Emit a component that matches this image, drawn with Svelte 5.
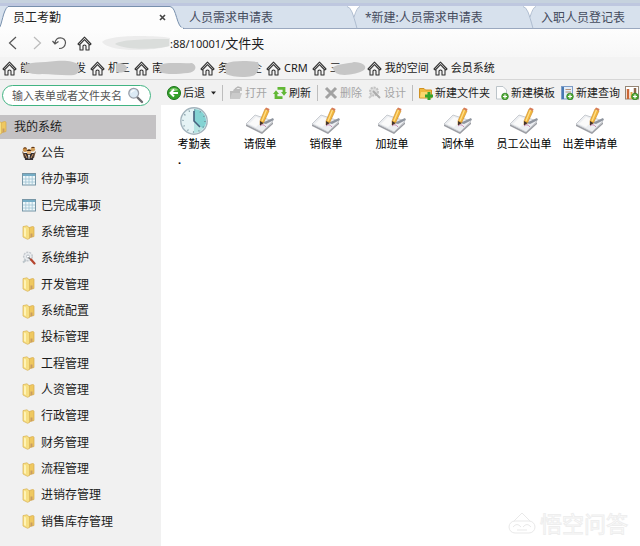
<script>
  const tabs = ['人员需求申请表', '*新建:人员需求申请表', '入职人员登记表'];

  const bookmarks = [
    { head: '能', tail: '发', chars: 6, blob: 'M3 7C8 1 22 3 36 1C48 0 54 2 58 4C62 10 58 14 54 15C44 16 34 14 22 14C12 15 3 12 3 7Z' },
    { head: '机', tail: '三', chars: 2, blob: 'M8 4C12 2 18 4 19 8C18 13 12 13 8 12Z' },
    { head: '南', tail: '', chars: 4, blob: 'M7 6C12 1 30 4 40 3C46 6 44 12 36 13C26 14 14 15 8 12Z' },
    { head: '务', tail: '企', chars: 4, blob: 'M7 4C16 0 30 1 40 2C42 8 40 15 34 16C26 18 14 17 8 14Z' },
    { head: 'CRM' },
    { head: '三', tail: '', chars: 3, blob: 'M2 8C8 3 18 4 24 2C32 2 38 6 34 10C28 14 12 17 6 13Z' },
    { head: '我的空间' },
    { head: '会员系统' }
  ];

  const tree = [
    ['公告', 'people'],
    ['待办事项', 'table'],
    ['已完成事项', 'table'],
    ['系统管理', 'folder'],
    ['系统维护', 'tool'],
    ['开发管理', 'folder'],
    ['系统配置', 'folder'],
    ['投标管理', 'folder'],
    ['工程管理', 'folder'],
    ['人资管理', 'folder'],
    ['行政管理', 'folder'],
    ['财务管理', 'folder'],
    ['流程管理', 'folder'],
    ['进销存管理', 'folder'],
    ['销售库存管理', 'folder']
  ];

  const forms = ['请假单', '销假单', '加班单', '调休单', '员工公出单', '出差申请单'];
</script>

{#snippet home()}
  <svg width="15" height="15" viewBox="0 0 15 15" fill="none" stroke="#333" stroke-width="1.1" stroke-linejoin="round">
    <path d="M1 8L7.5 1.2L14 8L12.7 9L7.5 3.7L2.3 9Z" />
    <path d="M3 9V14H6V10Q6 9 7.5 9T9 10V14H12V9" />
  </svg>
{/snippet}

{#snippet folder()}
  <svg width="14" height="15" viewBox="0 0 14 15">
    <path d="M6 3L10.500 1.500Q12 1.500 12 2.500V11.500L6 13Z" fill="#efc860" stroke="#d5a94b" stroke-width=".7" />
    <path d="M1 1.6L5 .8L7.500 3V13.500L5.500 14.300L1 12Z" fill="#f7df82" stroke="#d7b054" stroke-width=".7" />
    <path d="M2 2.500L4 3.500V12L2 11Z" fill="#fff3b5" />
    <path d="M8.500 8.500H10.500V12L8.500 12.500Z" fill="#c99d62" />
  </svg>
{/snippet}

{#snippet treeIcon(kind)}
  {#if kind === 'folder'}
    {@render folder()}
  {:else if kind === 'table'}
    <svg width="14" height="13" viewBox="0 0 14 13">
      <rect x=".5" y=".5" width="13" height="11.5" fill="#eff8fb" stroke="#7796a6" />
      <rect x="1" y="1" width="12" height="2" fill="#75adc6" />
      <path d="M3.8 3V12M7 3V12M10.2 3V12M1 6H13M1 9H13" stroke="#9fc3d3" stroke-width=".8" />
    </svg>
  {:else if kind === 'people'}
    <svg width="14" height="14" viewBox="0 0 14 14">
      <path d="M0 5L3 8L4 12H2ZM14 5L11 8L10 12H12Z" fill="#705037" />
      <circle cx="3" cy="3.7" r="2.3" fill="#c98d45" />
      <circle cx="10.8" cy="3.2" r="2.3" fill="#d3a05a" />
      <path d="M1 2.5Q3 0 5 2.5ZM9 2Q11 -.5 13 2Z" fill="#5c3519" />
      <path d="M2 7H12L11 14H3Z" fill="#363033" />
      <circle cx="7" cy="6" r="2.4" fill="#e3b278" />
      <path d="M4.5 5Q7 1.5 9.5 5Z" fill="#382315" />
      <path d="M6 9H8L7.3 13H6.7Z" fill="#eee" />
      <path d="M3 8L5 12M11 8L9 12" stroke="#d39b64" />
    </svg>
  {:else}
    <svg width="14" height="14" viewBox="0 0 14 14">
      <circle cx="6" cy="5.5" r="4.3" fill="#e8ebee" stroke="#c3c8cd" stroke-width="1.5" stroke-dasharray="2 1" />
      <circle cx="6" cy="5.5" r="1.5" fill="#fff" stroke="#b9bfc5" />
      <path d="M1 11.5L4 9" stroke="#bcc5ca" stroke-width="2" />
      <path d="M6.5 6.5L10 9.5" stroke="#777" stroke-width="1.3" />
      <path d="M9 8.5L12.5 12.5" stroke="#b5452e" stroke-width="2.2" stroke-linecap="round" />
    </svg>
  {/if}
{/snippet}

{#snippet plus()}
  <circle cx="10" cy="10.5" r="3.3" fill="#56ad3a" stroke="#2c8221" stroke-width=".8" />
  <path d="M8 10.5H12M10 8.5V12.5" stroke="#fff" stroke-width="1.2" />
{/snippet}

<div class="window">
  <header>
    <nav class="tabs" aria-label="标签页">
      <div class="tab active">
        <svg class="shape" width="184" height="23" viewBox="0 0 184 23">
          <path d="M-1 22.5C2 19 3 4 8 .5H170C177 1 176 22 184 22.5V23H-1Z" fill="#fdfdfd" stroke="#7890ad" />
          <path d="M0 22.5H183" stroke="#fdfdfd" stroke-width="2" />
        </svg>
        <button class="title">员工考勤</button>
        <button class="close" aria-label="关闭">
          <svg width="7" height="7" viewBox="0 0 7 7"><path d="M1 1L6 6M6 1L1 6" stroke="#444" stroke-width="1.6" /></svg>
        </button>
      </div>
      {#each tabs as name, i}
        <div class="tab">
          {#if i > 0}
            <svg class="notch" width="16" height="23" viewBox="0 0 16 23">
              <path d="M1 0H14Q11 2 8 11Q5 2 1 0Z" fill="#fff" />
              <path d="M1 .5Q4 1 6 6T11 22.5M14 .5Q11 1 8 11" fill="none" stroke="#a3b2c8" stroke-width=".8" />
            </svg>
          {/if}
          <button class="title">{name}</button>
        </div>
      {/each}
    </nav>

    <div class="address">
      <div class="history">
        <button aria-label="后退">
          <svg width="9" height="14" viewBox="0 0 9 14" fill="none" stroke="#555" stroke-width="1.2"><path d="M8 1L1.5 7L8 13" /></svg>
        </button>
        <button aria-label="前进">
          <svg width="9" height="14" viewBox="0 0 9 14" fill="none" stroke="#bbb" stroke-width="1.2"><path d="M1 1L7.5 7L1 13" /></svg>
        </button>
      </div>
      <button aria-label="刷新">
        <svg width="15" height="14" viewBox="0 0 15 14" fill="none" stroke="#555" stroke-width="1.2"><path d="M3 7.5C3 -.5 14 .5 13.5 7C13 11 10 12.5 7 12.5M.5 5L3 8L6.5 5.5" /></svg>
      </button>
      <button aria-label="主页">{@render home()}</button>
      <svg class="veil" width="68" height="16" viewBox="0 0 68 16">
        <path d="M0 7C6 0 50 0 68 3V11C52 16 8 18 0 7Z" fill="#ececec" />
        <path d="M13 9C20 4 50 4 67 4V11C52 15 24 15 13 9Z" fill="#dadddb" />
      </svg>
      <span class="url">:88/10001/<span class="path">文件夹</span></span>
    </div>

    <nav class="bookmarks" aria-label="书签">
      {#each bookmarks as b}
        <a href="#top">
          {@render home()}
          <span class="mark" style:width={b.chars ? `${b.chars}em` : null}>
            <span>{b.head}</span>
            {#if b.blob}
              <span>{b.tail}</span>
              <svg class="blob" width="68" height="18" viewBox="0 0 68 18"><path d={b.blob} fill="#c6c6c6" /></svg>
            {/if}
          </span>
        </a>
      {/each}
    </nav>
  </header>

  <div class="body">
    <aside>
      <label class="search">
        <input type="text" placeholder="输入表单或者文件夹名" aria-label="搜索" />
        <svg width="17" height="17" viewBox="0 0 17 17">
          <path d="M10 10L15 15" stroke="#6c6c70" stroke-width="2.4" stroke-linecap="round" />
          <circle cx="6.7" cy="6.2" r="4.9" fill="#dceaf5" stroke="#999ea8" stroke-width="1.3" />
          <path d="M4 5.5Q5 3.5 7.5 3.5" fill="none" stroke="#fff" stroke-width="1.2" />
        </svg>
      </label>
      <div class="root">{@render folder()}<span>我的系统</span></div>
      <ul>
        {#each tree as [name, kind]}
          <li><a href="#top"><span class="ico">{@render treeIcon(kind)}</span>{name}</a></li>
        {/each}
      </ul>
    </aside>

    <main>
      <div class="toolbar">
        <button>
          <svg width="14" height="14" viewBox="0 0 14 14">
            <circle cx="7" cy="7" r="6.5" fill="#35a12b" stroke="#1d741c" />
            <path d="M2.5 4Q7 0 11.5 4Q7 6 2.5 4Z" fill="#88cf74" />
            <path d="M11 7H4M7 3.5L3.5 7L7 10.5" fill="none" stroke="#fff" stroke-width="2" />
          </svg>后退
        </button>
        <svg width="5" height="4" viewBox="0 0 5 4"><path d="M0 .5H5L2.5 3.5Z" fill="#222" /></svg>
        <i></i>
        <button disabled>
          <svg width="14" height="14" viewBox="0 0 14 14">
            <path d="M1 5H4L5 3H11V12L9 13H1Z" fill="#bcbcbc" />
            <path d="M3 7H13L11 13H1Z" fill="#cacaca" /><path d="M6 3L9 1L12 2V5" fill="none" stroke="#b5b5b5" stroke-width="1.5" />
          </svg>打开
        </button>
        <button>
          <svg width="14" height="14" viewBox="0 0 14 14">
            <path d="M4.500 2.300H11V7M9.500 11.700H3V7" fill="none" stroke="#62b835" stroke-width="2.800" />
            <path d="M8 6H14L11 9.800ZM0 8H6L3 4.200Z" fill="#62b835" />
          </svg>刷新
        </button>
        <i></i>
        <button disabled>
          <svg width="14" height="14" viewBox="0 0 14 14"><path d="M2 2L12 12M12 2L2 12" stroke="#a2a2a2" stroke-width="3" /></svg>删除
        </button>
        <button disabled>
          <svg width="14" height="14" viewBox="0 0 14 14">
            <circle cx="6" cy="5.5" r="4" fill="#ddd" stroke="#c1c1c1" stroke-width="2" stroke-dasharray="2 1" />
            <path d="M5 5L12 12" stroke="#ababab" stroke-width="2" /><path d="M1 12L4 9" stroke="#ccc" stroke-width="2" />
          </svg>设计
        </button>
        <i></i>
        <div class="create">
          <button>
            <svg width="14" height="14" viewBox="0 0 14 14">
              <path d="M.5 2.5H5L6.5 4H12.5V12H.5Z" fill="#f1b83e" stroke="#d19223" />
              <path d="M2 6H12V11.5H1Z" fill="#fad76f" />
              <path d="M10 6V14M6 10H14" stroke="#35a32c" stroke-width="3" />
            </svg>新建文件夹
          </button>
          <button>
            <svg width="14" height="14" viewBox="0 0 14 14">
              <path d="M1.5 .5H8L11.5 4V13H1.5Z" fill="#fdfdfd" stroke="#bcc4c9" />{@render plus()}
            </svg>新建模板
          </button>
          <button>
            <svg width="14" height="14" viewBox="0 0 14 14">
              <rect x="1.5" y=".5" width="11" height="12.5" fill="#e2edf9" stroke="#7d9cc6" />
              <path d="M3 1V13" stroke="#4779b3" stroke-width="2" /><path d="M5.5 3.5H11M5.5 6H11" stroke="#b99377" />{@render plus()}
            </svg>新建查询
          </button>
          <button aria-label="新建报表">
            <svg width="14" height="14" viewBox="0 0 14 14">
              <rect x=".5" y=".5" width="13" height="12.5" fill="#fff" stroke="#958675" />
              <path d="M3 3V13" stroke="#cb6635" stroke-width="2.5" /><path d="M6.5 6V13" stroke="#e2aa45" stroke-width="2" /><path d="M10 2V9" stroke="#8b6549" stroke-width="2.5" />{@render plus()}
            </svg>
          </button>
        </div>
      </div>

      <div class="forms">
        <a href="#top">
          <svg width="32" height="30" viewBox="0 0 32 30">
            <circle cx="16" cy="15" r="13.2" fill="#e5f3f5" stroke="#a3b4bd" stroke-width="1.4" />
            <path d="M16 15V3A12 12 0 0 1 25 23Z" fill="#84d3d3" />
            <path d="M16 15L25 23A12 12 0 0 1 16 27Z" fill="#b6e4e2" />
            <circle cx="16" cy="15" r="11" fill="none" stroke="#718d98" stroke-width="1.4" stroke-dasharray="1 4.76" />
            <path d="M16 5V15L22 21" fill="none" stroke="#45617d" stroke-width="1.6" />
          </svg>
          <span>考勤表</span>
          <span class="dot">.</span>
        </a>
        {#each forms as name}
          <a href="#top">
            <svg width="32" height="30" viewBox="0 0 32 30">
              <path d="M2 18L18 26L29 16V18L18 28L2 20Z" fill="#9b9da3" />
              <path d="M2 18L11 9L29 15L18 26Z" fill="#eceef1" stroke="#bec1c6" stroke-width=".8" />
              <path d="M5 18L12 11L20 14L12 21Z" fill="#fafafa" />
              <path d="M18 17L29 12L30 14L22 18Z" fill="#8f959f" />
              <path d="M16 15L21 3L25 5L19.500 17L16 19Z" fill="#f2b63d" stroke="#c98b2c" stroke-width=".6" />
              <path d="M18 15L22.500 4" stroke="#ffe08a" stroke-width="1.2" />
              <path d="M21 3L22 1.500L25.500 3L25 5Z" fill="#d77a55" />
              <path d="M16 15L19.500 17L16 20Z" fill="#44352e" />
              <path d="M16 20Q19 17 22 21" fill="none" stroke="#c789b4" />
            </svg>
            <span>{name}</span>
          </a>
        {/each}
      </div>
    </main>
  </div>

  <div class="brand">
    <svg width="28" height="24" viewBox="0 0 28 24" fill="#fff" stroke="#e9e9e9">
      <path d="M5 11L14 2L23 11" /><rect x="1" y="10" width="26" height="12" rx="6" />
      <path d="M5 16Q9 11 13 16M15 16Q19 11 23 16M9 19H19" fill="none" />
    </svg>
    <span>悟空问答</span>
  </div>
</div>

<style>
  :global(body) { margin: 0; }
  .window {
    position: relative;
    display: flex;
    flex-direction: column;
    min-height: 100vh;
    overflow: hidden;
    background: #fff;
    color: #1c1c1c;
    font: 11px/16px "Noto Sans", "Noto Sans CJK SC", sans-serif;
  }
  svg { display: block; flex: none; }
  a { color: inherit; text-decoration: none; }
  button {
    display: flex;
    align-items: center;
    padding: 0;
    border: 0;
    background: none;
    color: inherit;
    font: inherit;
    white-space: nowrap;
  }

  .tabs {
    display: flex;
    height: 23px;
    padding-top: 6px;
    overflow: hidden;
    background: linear-gradient(#c6d2de 0 3px, #bec7df 3px 6px, #d7e1ed 6px 28px, #9aa8bf 28px);
    color: #454c5e;
    font-size: 12px;
  }
  .tab {
    position: relative;
    display: flex;
    flex: 0 0 176px;
    box-sizing: border-box;
    align-items: center;
    justify-content: space-between;
    padding: 0 10px 0 13px;
  }
  .tab button { position: relative; }
  .active { z-index: 1; color: #222; }
  .shape { position: absolute; left: 0; top: 0; }
  .notch { position: absolute; left: -6px; top: 0; }

  .address {
    display: flex;
    align-items: center;
    height: 28px;
    gap: 10px;
    padding: 0 8px;
    background: linear-gradient(#fdfdfd, #f7f7f7);
  }
  .history { display: flex; gap: 16px; }
  .url { margin-left: -10px; white-space: nowrap; }
  .path { font-size: 13px; }

  .bookmarks {
    display: flex;
    align-items: center;
    height: 22px;
    gap: 4px;
    padding-left: 2px;
    border-bottom: 1px solid #d6d6d6;
    background: #f3f3f3;
    white-space: nowrap;
  }
  .bookmarks a { display: flex; align-items: center; gap: 3px; }
  .mark { position: relative; display: flex; justify-content: space-between; }
  .blob { position: absolute; left: 0; top: 0; }

  .body { display: flex; flex: 1; }
  aside {
    display: flex;
    flex: 0 0 161px;
    min-width: 0;
    flex-direction: column;
    background: #f1f1f1;
    font-size: 12px;
  }
  .search {
    display: flex;
    align-items: center;
    box-sizing: border-box;
    height: 21px;
    margin: 5px 10px 9px 2px;
    padding: 0 6px 0 9px;
    border: 1px solid #42b483;
    border-radius: 11px;
    background: #fff;
  }
  input {
    flex: 1;
    width: 0;
    min-width: 0;
    padding: 0;
    border: 0;
    outline: 0;
    background: none;
    font: 11px/16px "Noto Sans", "Noto Sans CJK SC", sans-serif;
  }
  input::placeholder { color: #555; opacity: 1; }
  .root {
    display: flex;
    align-items: center;
    height: 24px;
    gap: 6px;
    margin-right: 5px;
    overflow: hidden;
    background: #c4c2c4;
  }
  .root svg { margin-left: -6px; }
  ul {
    display: grid;
    flex: 1;
    grid-auto-rows: 1fr;
    margin: 0;
    padding: 1px 0 11px 22px;
    list-style: none;
  }
  li { display: flex; align-items: center; }
  li a { display: flex; align-items: center; gap: 4px; }
  .ico { width: 15px; }

  main { flex: 1; min-width: 0; }
  .toolbar {
    display: flex;
    align-items: center;
    height: 25px;
    gap: 6px;
    padding-left: 6px;
    overflow: hidden;
    background: #f1f1f1;
  }
  .toolbar button { flex: none; gap: 2px; }
  .toolbar button:disabled { color: #a5a5a5; }
  .toolbar i { flex: none; width: 1px; height: 16px; background: #bdbdbd; }
  .create { display: flex; gap: 5px; }

  .forms { display: flex; flex-wrap: wrap; }
  .forms a {
    display: flex;
    flex-direction: column;
    align-items: center;
    width: 66px;
    padding-top: 1px;
    color: #000;
  }
  .dot { align-self: flex-start; margin-left: 17px; font-weight: bold; }

  .brand {
    position: absolute;
    right: 12px;
    bottom: 8px;
    display: flex;
    align-items: center;
    gap: 4px;
    color: #fff;
    font-size: 22px;
    line-height: 30px;
    -webkit-text-stroke: 1px #eee;
  }
</style>
